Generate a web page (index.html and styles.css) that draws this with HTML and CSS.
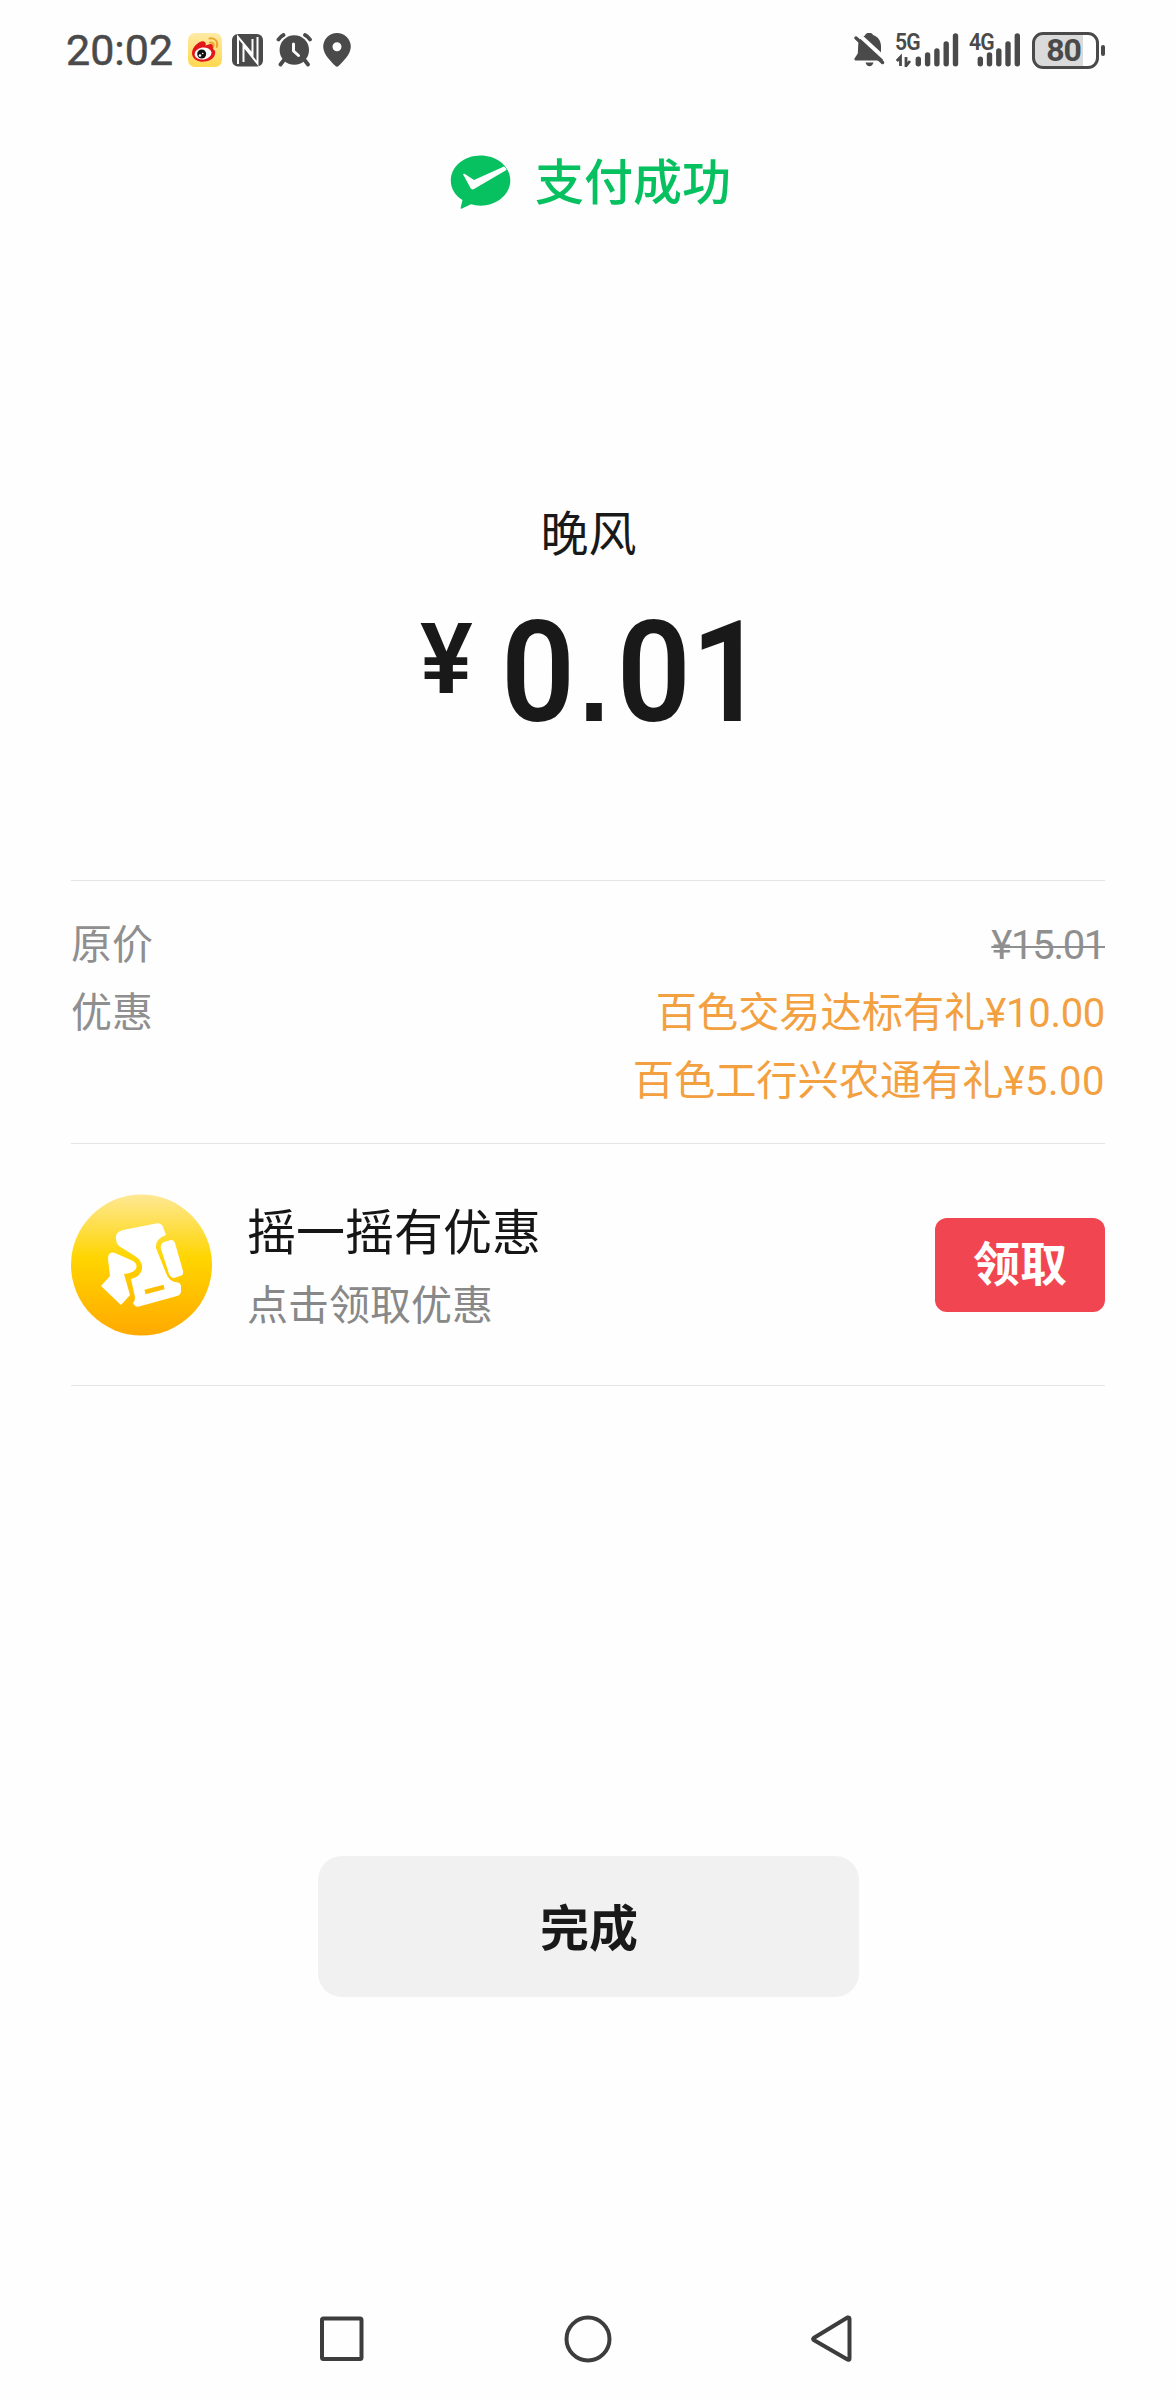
FILE: index.html
```html
<!DOCTYPE html>
<html lang="zh-CN">
<head>
<meta charset="utf-8">
<title>支付成功</title>
<link rel="stylesheet" href="styles.css">
</head>
<body>
<div class="screen">
  <header class="status">
    <div class="status-left">
      <span class="clock">20:02</span>
      <svg class="weibo" width="34" height="34" viewBox="0 0 34 34">
        <defs><linearGradient id="wb" x1="0" y1="0" x2="0" y2="1"><stop offset="0" stop-color="#ffeaa6"/><stop offset="1" stop-color="#ffd84f"/></linearGradient></defs>
        <rect width="34" height="34" rx="7" fill="url(#wb)"/>
        <path d="M4 20C4 14 12 7 16 8.500Q18.500 9.500 17.500 12.500Q24 9.500 25.500 12.500Q26 14 25 16Q28 17.500 27 21C26 27 18 29.500 12 28.500C7 27.500 4 24 4 20Z" fill="#e2171b"/>
        <ellipse cx="15" cy="20.500" rx="8.500" ry="6" fill="#fff" transform="rotate(-8 15 20.500)"/>
        <circle cx="13.700" cy="21" r="4.500" fill="#111"/><circle cx="12" cy="22.500" r="1.300" fill="#fff"/><circle cx="14.700" cy="20.500" r=".8" fill="#fff"/>
        <path d="M21.500 5.500C27.500 4.500 30.500 9 28.800 14M22 9.500C25 9 26.500 11 25.500 13.500" fill="none" stroke="#eda62e" stroke-width="2" stroke-linecap="round"/>
      </svg>
      <svg class="nfc" width="32" height="33" viewBox="0 0 32 33">
        <rect width="31" height="32.500" rx="6" fill="#4a4a4a"/>
        <path d="M6 30V3L20.500 20.500V5M11.500 28V12L25.500 29.500V3" fill="none" stroke="#fefefe" stroke-width="2"/>
      </svg>
      <svg class="alarm" width="37" height="34" viewBox="0 0 37 34">
        <g fill="none" stroke="#4a4a4a" stroke-width="3.800" stroke-linecap="round"><path d="M2.500 6.500Q4.500 3.500 7.500 2M34 6.500Q32 3.500 29 2M8 27L4.500 31.500M28.500 27L32 31.500"/></g>
        <circle cx="18.300" cy="17" r="14.700" fill="#4a4a4a"/>
        <path d="M17.500 11V18L22.500 22.500" fill="none" stroke="#fefefe" stroke-width="3" stroke-linecap="round" stroke-linejoin="round"/>
      </svg>
      <svg width="28" height="34" viewBox="0 0 28 34"><path fill-rule="evenodd" d="M14 0A13.800 13.800 0 0 1 27.800 13.800C27.800 21.500 19.500 29 15.800 32.800Q14 34.500 12.200 32.800C8.500 29 .2 21.500 .2 13.800A13.800 13.800 0 0 1 14 0ZM14 9.300A4.500 4.500 0 1 0 14 18.300A4.500 4.500 0 0 0 14 9.300Z" fill="#4a4a4a"/></svg>
    </div>
    <div class="status-right">
      <svg width="31" height="34" viewBox="0 0 31 34">
        <path d="M4.300 10.500C5 7 8 3.500 11 2.500C12 -1 18 -1 19 2C24 3.500 27 8 27 13V20L29.500 25.500Q30 27.500 28 27.500H2Q-.5 27.500 .8 25L3.800 20.500Z" fill="#4a4a4a"/>
        <path d="M11.500 29.500H19.500Q18.500 33.200 15.500 33.200T11.500 29.500Z" fill="#4a4a4a"/>
        <path d="M3 0L33 27.500" stroke="#fefefe" stroke-width="4"/><path d="M2 5L28.500 29.500" stroke="#4a4a4a" stroke-width="3.400" stroke-linecap="round"/>
      </svg>
      <div class="signal signal-5g">
        <span class="gen">5G</span>
        <svg width="64" height="34" viewBox="0 0 64 34"><path d="M4.500 33V24L.8 28M10 24V33L14 28" fill="none" stroke="#4a4a4a" stroke-width="2.800"/><path d="M22.300 26.200V30.700M31.600 22V30.700M40.900 18V30.700M50.200 11V30.700M59.500 3V30.700" fill="none" stroke="#4a4a4a" stroke-width="5.400" stroke-linecap="round"/></svg>
      </div>
      <div class="signal signal-4g">
        <span class="gen">4G</span>
        <svg width="52" height="34" viewBox="0 0 52 34"><path d="M10.300 26.200V30.700M19.500 22V30.700M28.800 18V30.700M38 11V30.700M47.300 3V30.700" fill="none" stroke="#4a4a4a" stroke-width="5.400" stroke-linecap="round"/></svg>
      </div>
      <div class="battery"><span class="charge">80</span></div><i class="nub"></i>
    </div>
  </header>

  <main>
    <div class="success">
      <svg width="61" height="55" viewBox="0 0 61 55"><path d="M30.500 .5C47 .5 60.300 11.500 60.300 25.500S47 50.700 30.500 50.700Q25.500 50.700 21 49.300L12 53.600Q10.300 54.300 10.700 52.500L12.500 45C5 40.500 .8 33.500 .8 25.500C.8 11.500 14 .5 30.500 .5Z" fill="#07c160"/><path d="M14 21Q12 18.500 14.500 18.700L24 25L54 11.500Q57.500 14 56 15.200L24 34Q21.700 35.300 20.500 33Z" fill="#fefefe"/></svg>
      <h1 class="success-text">支付成功</h1>
    </div>
    <div class="payee">晚风</div>
    <div class="amount"><span class="yen">¥</span><span class="number">0<span class="point">.</span><span class="tenth">0</span>1</span></div>

    <dl class="details">
      <dt>原价</dt><dd><s class="num original">¥15.01</s></dd>
      <dt>优惠</dt><dd class="discount">百色交易达标有礼<span class="num">¥10.00</span></dd>
      <dd class="discount last">百色工行兴农通有礼<span class="num">¥5.00</span></dd>
    </dl>

    <section class="promo">
      <svg class="promo-icon" width="142" height="142" viewBox="0 0 142 142">
        <defs><linearGradient id="gold" x1="0" y1="0" x2="0" y2="1"><stop offset="0" stop-color="#fee894"/><stop offset=".45" stop-color="#ffd500"/><stop offset="1" stop-color="#ffa900"/></linearGradient></defs>
        <circle cx="70.500" cy="71" r="70.500" fill="url(#gold)"/>
        <path fill="#fff" d="M52 36L85 29.500Q90 28.500 92 33L95 41Q84 45 85 54L95 79Q98 88 107 88.500Q110 89 110 93V97Q110 101 106 102L68 112.500Q64 113.500 62 109Q65 106 63.500 101L60 85Q72 82 71 71Q69 65 64 62L48 52Q45 49 45 45Q44 38 52 36Z"/>
        <path fill="#fff" d="M37 65Q37 57 44 59L62 67Q68 71 64 76Q61 79 53 80L59 101L50 111L30 92L39 82Z"/>
        <path fill="#fff" d="M93 48L100 46Q103 46 104 49L112 77Q113 81 109 82L103 84Q100 84 98 80L90 55Q89 50 93 48Z"/>
        <path d="M74 98L93 93" stroke="#ffbf00" stroke-width="4.500"/>
      </svg>
      <div class="promo-copy"><h2>摇一摇有优惠</h2><p>点击领取优惠</p></div>
      <button class="claim">领取</button>
    </section>
    <button class="done">完成</button>
  </main>

  <nav class="nav">
    <svg width="46" height="48" viewBox="0 0 46 48"><rect x="3" y="3.500" width="39.500" height="40.500" rx="1.500"/></svg>
    <svg width="48" height="48" viewBox="0 0 48 48"><circle cx="24" cy="24" r="21.500"/></svg>
    <svg width="42" height="48" viewBox="0 0 42 48"><path d="M2.700 23L36.500 2.500Q38.500 2 38.500 4V43.500Q38.500 45.500 36.500 44.500L2.700 25Q1.500 24 2.700 23Z"/></svg>
  </nav>
</div>
</body>
</html>
```

FILE: styles.css
```css
* { box-sizing: border-box; }
body, h1, h2, p, dl, dt, dd { margin: 0; font-weight: 400; }
body { background: #fefefe; color: #191919; font-family: Roboto, "Noto Sans CJK SC", sans-serif; }
svg { display: block; flex: none; }
button { border: 0; padding: 0; font-family: inherit; }
.screen { width: 1176px; height: 2400px; display: flex; flex-direction: column; overflow: hidden; }
main { flex: 1; display: flex; flex-direction: column; padding: 0 71px; }

.status { height: 100px; padding: 0 71px 0 66px; display: flex; justify-content: space-between; align-items: center; color: #4a4a4a; }
.status-left, .status-right { display: flex; align-items: center; }
.clock { width: 122px; font-size: 43px; line-height: 50px; -webkit-text-stroke: .5px #4a4a4a; }
.nfc { margin-left: 10px; }
.alarm { margin: 0 10px 0 12px; }
.signal { position: relative; }
.signal-5g { margin-left: 11px; }
.signal-4g { margin-left: 10px; }
.gen { position: absolute; left: -1px; top: -2px; font-size: 23px; line-height: 23px; font-weight: 600; letter-spacing: -1px; transform: scaleX(.92); transform-origin: left; }
.battery { width: 67px; height: 37px; margin-left: 10px; padding-right: 4px; border: 3px solid #4a4a4a; border-radius: 11px; background: linear-gradient(90deg, #dadada 48px, #fefefe 48px); text-align: center; }
.charge { font-size: 32px; line-height: 31px; font-weight: 700; letter-spacing: -1px; }
.nub { width: 4px; height: 11px; margin: 0 0 0 2px; border-radius: 2px; background: #4a4a4a; }

.success { height: 72px; margin-top: 47px; padding-left: 5px; display: flex; justify-content: center; align-items: center; gap: 24px; }
.success svg { margin-top: -1px; }
.success-text { color: #07c160; font-size: 49px; line-height: 72px; font-weight: 500; padding-top: 2px; }
.payee { margin-top: 279px; padding: 2px 0 0 1px; text-align: center; font-size: 48px; line-height: 70px; }
.amount { height: 166px; margin-top: 20px; padding-left: 349px; display: flex; font-weight: 600; }
.yen { width: 81px; font-size: 99px; line-height: 139px; }
.number { font-size: 141px; line-height: 166px; letter-spacing: 4px; transform: scaleX(.92); transform-origin: left; white-space: nowrap; }
.point { font-family: "Liberation Sans", sans-serif; font-weight: 700; font-size: 120px; line-height: 1; letter-spacing: 8px; }
.tenth { letter-spacing: 0; }

.details { height: 264px; margin-top: 124px; padding-top: 30px; border-top: 1px solid #e5e5e5; border-bottom: 1px solid #e5e5e5; display: grid; grid-template-columns: auto 1fr; grid-auto-rows: 68px; color: #8f8f8f; font-size: 41px; line-height: 69px; }
.details dd { text-align: right; }
.details .discount { color: #f3a040; font-size: 41.2px; }
.details .last { grid-column: 1 / -1; }
.num { font-size: 40px; letter-spacing: -.3px; }
.last .num { letter-spacing: .5px; }
.original { letter-spacing: -1.3px; line-height: 66px; }
s { text-decoration-thickness: 2px; }

.promo { height: 242px; border-bottom: 1px solid #e5e5e5; display: flex; align-items: center; }
.promo-copy { flex: 1; margin-left: 34px; padding-top: 11px; }
.promo h2 { font-size: 49px; line-height: 72px; color: #161616; }
.promo p { font-size: 41px; line-height: 72px; color: #888; }
.claim { width: 170px; height: 94px; border-radius: 12px; background: #f14651; color: #fff; font-size: 47px; font-weight: 700; line-height: 94px; }
.done { width: 541px; height: 141px; margin: 470px 0 0 247px; padding: 0 0 4px 1px; border-radius: 24px; background: #f1f1f1; color: #191919; font-size: 49px; font-weight: 700; }

.nav { height: 85px; padding: 0 323px 0 319px; display: flex; justify-content: space-between; }
.nav svg { fill: none; stroke: #3d3d3d; stroke-width: 4; stroke-linejoin: round; }
```
